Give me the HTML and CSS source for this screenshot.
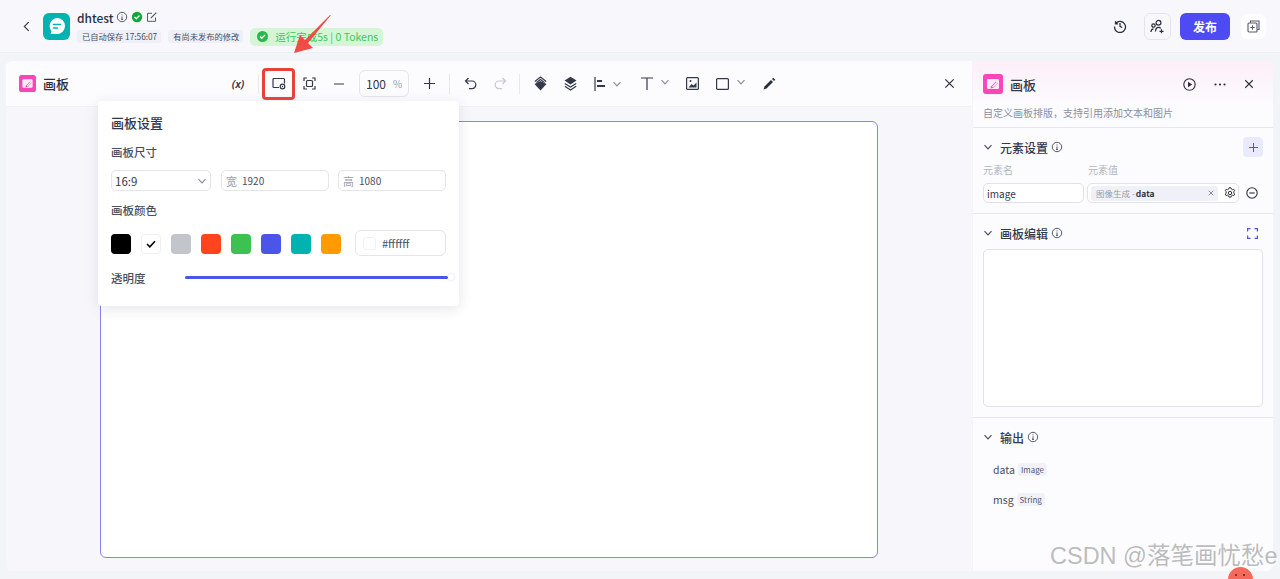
FILE: index.html
```html
<!DOCTYPE html>
<html lang="zh">
<head>
<meta charset="utf-8">
<title>画板</title>
<link rel="stylesheet" href="styles.css">
</head>
<body>
<svg class="defs" width="0" height="0" aria-hidden="true">
  <symbol id="info" viewBox="0 0 12 12"><circle cx="6" cy="6" r="4.7" fill="none" stroke="currentColor"/><path d="M6 5.400v3M5 8.400h2M6 3.400v1" fill="none" stroke="currentColor"/></symbol>
  <symbol id="chev" viewBox="0 0 10 10"><path d="M1.500 3.200 5 6.800l3.500-3.600" fill="none" stroke="currentColor" stroke-width="1.200"/></symbol>
  <symbol id="x" viewBox="0 0 12 12"><path d="M1.500 1.500l9 9M10.500 1.500l-9 9" fill="none" stroke="currentColor" stroke-width="1.300"/></symbol>
  <symbol id="board" viewBox="0 0 20 20"><rect width="20" height="20" rx="3" fill="#fb45b8"/><rect x="4" y="5" width="12" height="10" rx="1.200" fill="#fff" opacity=".9"/><path d="M8 12.500l5-5 2 1.500-5 5-2.500.5z" fill="#fb45b8"/><path d="M9.500 13l5-5" stroke="#fff" stroke-width="1.200"/></symbol>
</svg>

<header class="topbar">
  <svg class="back" width="7" height="11" viewBox="0 0 8 12"><path d="M6.500 1 1.500 6l5 5" fill="none" stroke="#33384a" stroke-width="1.300"/></svg>
  <div class="app-logo">
    <svg width="20" height="20" viewBox="0 0 20 20"><path d="M10 2a8 8 0 0 1 0 16H3.500l1-3A8 8 0 0 1 10 2z" fill="#fff"/><path d="M6.500 8.500h7M6.500 12h4" stroke="#00b2b0" stroke-width="1.600" stroke-linecap="round"/></svg>
  </div>
  <div class="app-meta">
    <div class="app-name-row">
      <span class="app-name">dhtest</span>
      <svg class="ico-info-dark" width="12" height="12"><use href="#info"/></svg>
      <svg width="12" height="12" viewBox="0 0 12 12"><circle cx="6" cy="6" r="5.200" fill="#12a537"/><path d="M3.500 6l1.800 1.800 3.200-3.300" fill="none" stroke="#fff" stroke-width="1.300"/></svg>
      <svg width="12" height="12" viewBox="0 0 12 12"><path d="M9.500 6.500v3.800h-8v-8h4.500" fill="none" stroke="#555a69"/><path d="M4.800 7.200l5.500-5.500" stroke="#555a69" stroke-width="1.200"/></svg>
    </div>
    <div class="app-tags">
      <span class="tag">已自动保存 17:56:07</span>
      <span class="tag">有尚未发布的修改</span>
      <span class="tag-run">
        <svg width="13" height="13" viewBox="0 0 13 13"><circle cx="6.500" cy="6.500" r="5.500" fill="#27b84a"/><path d="M4 6.500l1.800 1.800 3.300-3.400" fill="none" stroke="#fff" stroke-width="1.300"/></svg>
        运行完成5s | 0 Tokens
      </span>
    </div>
  </div>
  <div class="top-actions">
    <svg class="history" width="14" height="14" viewBox="0 0 14 14"><path d="M2.500 2.200v2.600h2.600M2.700 4.500A5.500 5.500 0 1 1 1.500 7.500M7 4v3.300l2.200 1.200" fill="none" stroke="#2b2f3d" stroke-width="1.300"/></svg>
    <div class="collab">
      <svg width="15" height="15" viewBox="0 0 15 15"><circle cx="8.500" cy="3.800" r="2.400" fill="none" stroke="#2b2f3d" stroke-width="1.200"/><circle cx="3.500" cy="6.500" r="1.700" fill="none" stroke="#2b2f3d" stroke-width="1.200"/><path d="M1 13c0-2 1-3.200 2.500-3.200M5.500 12.500c0-2.700 1.300-4.200 3-4.200 1 0 1.800.4 2.300 1.200M11.500 10.300v4M9.500 12.300h4" fill="none" stroke="#2b2f3d" stroke-width="1.200"/></svg>
    </div>
    <button class="publish">发布</button>
    <div class="copy-btn">
      <svg width="13" height="13" viewBox="0 0 13 13"><path d="M3.500 2.800V1h8.500v8.500h-1.800" fill="none" stroke="#555a69" stroke-width="1.100"/><rect x="1" y="3" width="9" height="9" rx="1" fill="none" stroke="#555a69" stroke-width="1.100"/><path d="M5.500 5.300v4.400M3.300 7.500h4.400" stroke="#555a69" stroke-width="1.100"/></svg>
    </div>
  </div>
</header>

<main class="workspace">
  <section class="board-panel">
    <div class="toolbar">
      <svg class="panel-icon" width="17" height="17"><use href="#board"/></svg>
      <span class="panel-title">画板</span>
      <div class="tools">
        <span class="tool var">(x)</span>
        <span class="divider"></span>
        <span class="tool"><svg width="14" height="13" viewBox="0 0 14 13"><path d="M7 10.500H2a1 1 0 0 1-1-1V2.500a1 1 0 0 1 1-1h9.500a1 1 0 0 1 1 1v4" fill="none" stroke="#33384a" stroke-width="1.200"/><circle cx="10.500" cy="9.500" r="2.300" fill="none" stroke="#33384a" stroke-width="1.200"/><circle cx="10.500" cy="9.500" r=".7" fill="#33384a"/></svg></span>
        <span class="tool"><svg width="13" height="13" viewBox="0 0 13 13"><path d="M1 4V1h3M9 1h3v3M12 9v3H9M4 12H1V9" fill="none" stroke="#33384a" stroke-width="1.200"/><rect x="3.500" y="3.500" width="6" height="6" rx="1" fill="none" stroke="#33384a" stroke-width="1.200"/></svg></span>
        <span class="tool"><svg width="10" height="2" viewBox="0 0 10 2"><path d="M0 1h10" stroke="#33384a" stroke-width="1.200"/></svg></span>
        <span class="zoom-box"><span class="zoom-num">100</span><span class="zoom-unit">%</span></span>
        <span class="tool"><svg width="11" height="11" viewBox="0 0 11 11"><path d="M0 5.500h11M5.500 0v11" stroke="#33384a" stroke-width="1.200"/></svg></span>
        <span class="divider"></span>
        <span class="tool"><svg width="13" height="13" viewBox="0 0 13 13"><path d="M4.500 1 1.500 4l3 3M1.500 4H8a3.800 3.800 0 0 1 0 7.600H5" fill="none" stroke="#33384a" stroke-width="1.200"/></svg></span>
        <span class="tool"><svg width="13" height="13" viewBox="0 0 13 13"><path d="M8.500 1l3 3-3 3M11.500 4H5a3.800 3.800 0 0 0 0 7.600h3" fill="none" stroke="#c5c8d2" stroke-width="1.200"/></svg></span>
        <span class="divider divider-tight"></span>
        <span class="tool"><svg width="13" height="15" viewBox="0 0 13 15"><path d="M6.500 5 12.500 8 6.500 14.500.5 8z" fill="#33384a"/><path d="M.8 5.500 6.500 1l5.700 4.500M2.500 6.500l4-3 4 3" fill="none" stroke="#33384a" stroke-width="1.100"/></svg></span>
        <span class="tool"><svg width="13" height="15" viewBox="0 0 13 15"><path d="M6.500.8 12.500 4.500 6.500 8.500.5 4.500z" fill="#33384a"/><path d="M.8 7.500l5.700 3.500 5.700-3.500M.8 10.300l5.700 3.700 5.700-3.700" fill="none" stroke="#33384a" stroke-width="1.100"/></svg></span>
        <span class="tool tool-drop"><svg class="drop-main" width="12" height="14" viewBox="0 0 12 14"><path d="M1 0v14" stroke="#33384a" stroke-width="1.200"/><path d="M3 3h5v2H3zM3 8h8v2H3z" fill="#33384a"/></svg><svg class="chev" width="10" height="10"><use href="#chev"/></svg></span>
        <span class="tool tool-drop tool-t"><svg class="drop-main" width="12" height="13" viewBox="0 0 12 13"><path d="M0 1h12M6 1v12" stroke="#33384a" stroke-width="1.200"/></svg><svg class="chev" width="10" height="10"><use href="#chev"/></svg></span>
        <span class="tool"><svg width="13" height="13" viewBox="0 0 13 13"><rect x=".6" y=".6" width="11.800" height="11.800" rx="1" fill="none" stroke="#33384a" stroke-width="1.200"/><path d="M2.500 10.500l3-3.500 2 1.500 3-3v5z" fill="#33384a"/><circle cx="4.500" cy="4" r="1" fill="#33384a"/></svg></span>
        <span class="tool tool-drop tool-rect"><svg class="drop-main" width="13" height="12" viewBox="0 0 13 12"><rect x=".6" y=".6" width="11.800" height="10.800" rx="1" fill="none" stroke="#33384a" stroke-width="1.200"/></svg><svg class="chev" width="10" height="10"><use href="#chev"/></svg></span>
        <span class="tool"><svg width="13" height="13" viewBox="0 0 13 13"><path d="M.5 12.500 1.500 9.500 8 3l2 2-6.500 6.500z" fill="#2b2f3d"/><path d="M9 2l1.300-1.300 2 2L11 4z" fill="#2b2f3d"/></svg></span>
      </div>
      <svg class="toolbar-close" width="11" height="11"><use href="#x"/></svg>
    </div>
    <div class="canvas">
      <div class="artboard"></div>
    </div>
  </section>

  <aside class="side-panel">
    <div class="side-head">
      <div class="side-title-row">
        <svg width="20" height="20"><use href="#board"/></svg>
        <span class="side-title">画板</span>
        <div class="side-actions">
          <svg width="13" height="13" viewBox="0 0 13 13"><circle cx="6.500" cy="6.500" r="5.700" fill="none" stroke="#2b2f3d" stroke-width="1.100"/><path d="M5 3.800v5.400l4.200-2.700z" fill="#2b2f3d"/></svg>
          <svg width="12" height="3" viewBox="0 0 12 3"><circle cx="1.500" cy="1.500" r="1.100" fill="#2b2f3d"/><circle cx="6" cy="1.500" r="1.100" fill="#2b2f3d"/><circle cx="10.500" cy="1.500" r="1.100" fill="#2b2f3d"/></svg>
          <svg width="10" height="10" viewBox="0 0 12 12"><use href="#x"/></svg>
        </div>
      </div>
      <p class="side-desc">自定义画板排版，支持引用添加文本和图片</p>
    </div>

    <div class="section section-elements">
      <div class="sec-head">
        <svg class="sec-chev" width="10" height="10"><use href="#chev"/></svg>
        <span class="sec-title">元素设置</span>
        <svg class="sec-info" width="12" height="12"><use href="#info"/></svg>
        <span class="add-btn">
          <svg width="9" height="9" viewBox="0 0 9 9"><path d="M0 4.500h9M4.500 0v9" stroke="#4f54e8" stroke-width="1"/></svg>
        </span>
      </div>
      <div class="el-labels"><span class="el-label-name">元素名</span><span>元素值</span></div>
      <div class="el-row">
        <span class="el-name">image</span>
        <span class="el-value">
          <span class="chip"><span class="chip-src">图像生成 -</span> <b class="chip-key">data</b>
            <svg class="chip-x" width="6" height="6" viewBox="0 0 12 12"><use href="#x"/></svg>
          </span>
          <svg class="gear" width="12" height="12" viewBox="0 0 12 12"><path d="M6 .7l1 .1.4 1.300 1.100.6 1.300-.4.9 1.400-.9 1v1.400l.9 1-.9 1.500-1.300-.4-1.100.6-.4 1.300H5l-.4-1.300-1.100-.6-1.300.4-.9-1.500.9-1v-1.400l-.9-1 .9-1.400 1.300.4 1.100-.6L5 .8z" fill="none" stroke="#2b2f3d"/><circle cx="6" cy="6" r="1.700" fill="none" stroke="#2b2f3d"/></svg>
        </span>
        <svg class="el-remove" width="12" height="12" viewBox="0 0 12 12"><circle cx="6" cy="6" r="5.200" fill="none" stroke="#2b2f3d" stroke-width="1.100"/><path d="M3.300 6h5.400" stroke="#2b2f3d" stroke-width="1.100"/></svg>
      </div>
    </div>

    <div class="section section-edit">
      <div class="sec-head">
        <svg class="sec-chev" width="10" height="10"><use href="#chev"/></svg>
        <span class="sec-title">画板编辑</span>
        <svg class="sec-info" width="12" height="12"><use href="#info"/></svg>
        <svg class="expand" width="11" height="11" viewBox="0 0 11 11"><path d="M.6 3.500V.6h2.900M7.500.6h2.900v2.900M10.400 7.500v2.900H7.500M3.500 10.400H.6V7.500" fill="none" stroke="#4f54e8" stroke-width="1.200"/></svg>
      </div>
      <div class="edit-area"></div>
    </div>

    <div class="section section-output">
      <div class="sec-head">
        <svg class="sec-chev" width="10" height="10"><use href="#chev"/></svg>
        <span class="sec-title">输出</span>
        <svg class="sec-info" width="12" height="12"><use href="#info"/></svg>
      </div>
      <div class="out-row"><span>data</span><span class="type">Image</span></div>
      <div class="out-row"><span>msg</span><span class="type">String</span></div>
    </div>
  </aside>
</main>

<div class="popover">
  <h3 class="pop-title">画板设置</h3>
  <div class="pop-label">画板尺寸</div>
  <div class="size-row">
    <span class="field field-ratio"><span>16:9</span><svg width="10" height="10"><use href="#chev"/></svg></span>
    <span class="field field-num"><i>宽</i><span>1920</span></span>
    <span class="field field-num"><i>高</i><span>1080</span></span>
  </div>
  <div class="pop-label pop-label-color">画板颜色</div>
  <div class="color-row">
    <span class="swatch c-black"></span>
    <span class="swatch c-white"><svg width="10" height="8" viewBox="0 0 10 8"><path d="M1 4l2.800 2.800L9 1.200" fill="none" stroke="#000" stroke-width="1.500"/></svg></span>
    <span class="swatch c-gray"></span>
    <span class="swatch c-red"></span>
    <span class="swatch c-green"></span>
    <span class="swatch c-blue"></span>
    <span class="swatch c-teal"></span>
    <span class="swatch c-orange"></span>
    <span class="hex"><span class="hex-dot"></span>#ffffff</span>
  </div>
  <div class="opacity-row">
    <span class="pop-label-plain">透明度</span>
    <span class="slider"><span class="knob"></span></span>
  </div>
</div>

<div class="mark-box"></div>
<svg class="arrow" width="50" height="50" viewBox="0 0 50 50"><path d="M41 0 18 28 23 33 4 38 10 20 15 25 40 0z" fill="#f14b45"/></svg>

<div class="watermark">CSDN @落笔画忧愁e</div>
<div class="blob"><span></span><span></span></div>
</body>
</html>
```
FILE: styles.css
```css
* { box-sizing: border-box; }
html, body { margin: 0; padding: 0; }
body {
  width: 1280px;
  height: 579px;
  overflow: hidden;
  position: relative;
  background: #f3f4f8;
  font-family: "Noto Sans CJK SC", "Noto Sans", sans-serif;
  color: #33384a;
}
.defs { position: absolute; }

/* top bar */
.topbar {
  height: 53px;
  display: flex;
  align-items: center;
  background: #f8f8fc;
  border-bottom: 1px solid #eeeff4;
  padding-left: 23px;
}
.back { margin-right: 13px; }
.app-logo {
  width: 27px;
  height: 27px;
  border-radius: 6px;
  background: #00b2b0;
  display: flex;
  align-items: center;
  justify-content: center;
}
.app-meta { margin-left: 7px; display: flex; flex-direction: column; gap: 2px; margin-top: 2px; }
.app-name-row { display: flex; align-items: center; gap: 3px; height: 17px; }
.app-name { font-size: 12px; font-weight: 500; color: #2b2f3d; margin-right: -1px; }
.ico-info-dark { color: #555a69; }
.app-tags { display: flex; align-items: center; gap: 7px; }
.tag {
  font-size: 8.25px;
  line-height: 13px;
  padding: 0 4px 0 5px;
  background: #eeeff7;
  border-radius: 3px;
  color: #4a4f5f;
  white-space: nowrap;
}
.tag-run {
  height: 18px;
  width: 133px;
  padding-left: 6px;
  display: flex;
  align-items: center;
  gap: 6px;
  border-radius: 5px;
  background: #d5f5d7;
  color: #3cc85a;
  font-size: 10.5px;
  white-space: nowrap;
}
.top-actions { margin-left: auto; display: flex; align-items: center; padding-right: 14px; }
.history { margin-right: 17px; }
.collab {
  width: 27px;
  height: 27px;
  border: 1px solid #e4e5ec;
  border-radius: 6px;
  display: flex;
  align-items: center;
  justify-content: center;
  margin-right: 9px;
}
.publish {
  width: 50px;
  height: 27px;
  border: 0;
  border-radius: 6px;
  background: #4e4bf5;
  color: #fff;
  font: 600 12px "Noto Sans CJK SC", sans-serif;
  padding: 0;
  margin-right: 11px;
}
.copy-btn {
  width: 25px;
  height: 25px;
  border-radius: 6px;
  background: #fff;
  display: flex;
  align-items: center;
  justify-content: center;
}

/* workspace */
.workspace {
  display: flex;
  height: 526px;
  padding: 8px 7px 8px 6px;
  gap: 1px;
}
.board-panel {
  width: 966px;
  display: flex;
  flex-direction: column;
  border-radius: 6px 0 0 6px;
  overflow: hidden;
  background: #f7f7fb;
}
.toolbar {
  height: 46px;
  flex: none;
  display: flex;
  align-items: center;
  background: #fcfcff;
  border-bottom: 1px solid #f0f0f6;
  padding: 0 17px 0 13px;
}
.panel-title { margin-left: 7px; font-size: 13px; font-weight: 500; color: #2b2f3d; width: 180px; }
.tools { display: flex; align-items: center; }
.tool {
  width: 30px;
  height: 20px;
  display: flex;
  align-items: center;
  justify-content: center;
  flex: none;
}
.var { font: italic 600 11px "Noto Sans", sans-serif; color: #33384a; }
.divider { width: 1px; height: 20px; background: #e8e9ef; margin: 0 5px; flex: none; }
.divider-tight { margin-left: 4px; }
.zoom-box {
  width: 50px;
  height: 27px;
  margin: 0 5px;
  border: 1px solid #e4e5ec;
  border-radius: 6px;
  display: flex;
  align-items: center;
  padding-left: 6px;
  font-size: 12px;
}
.zoom-unit { margin-left: 7px; font-size: 10px; color: #9b9ea9; }
.tool-drop { width: 45px; justify-content: flex-start; padding-left: 9px; }
.tool-t { width: 45px; margin-left: 2px; }
.tool-rect { width: 47px; }
.tool-t .chev { margin-left: 7px; margin-top: -3px; }
.tool-rect .chev { margin-left: 7px; margin-top: -3px; }
.drop-main { flex: none; }
.chev { color: #8a8e9b; margin-left: 6px; flex: none; }
.toolbar-close { margin-left: auto; color: #2b2f3d; }

.canvas { flex: 1; padding: 14px 94px 13px 94px; }
.artboard {
  height: 100%;
  background: #fff;
  border: 1px solid #8583f6;
  border-radius: 6px;
}

/* side panel */
.side-panel {
  width: 300px;
  background: #fcfcff;
  border-radius: 0 6px 6px 0;
  display: flex;
  flex-direction: column;
}
.side-head {
  height: 67px;
  flex: none;
  padding: 13px 10px 0;
  background: linear-gradient(180deg, #fdeff8 0%, #fcfcff 70%);
  border-bottom: 1px solid #e6e7ef;
  border-radius: 0 6px 0 0;
}
.side-title-row { display: flex; align-items: center; height: 20px; }
.side-title { margin-left: 7px; font-size: 13px; font-weight: 500; color: #33384a; }
.side-actions {
  margin-left: auto;
  display: flex;
  align-items: center;
  gap: 18px;
  padding-right: 9px;
  color: #2b2f3d;
}
.side-desc { margin: 12px 0 0; font-size: 10px; line-height: 14px; color: #8a8f9f; }

.section { border-bottom: 1px solid #e6e7ef; padding: 0 10px; flex: none; }
.section-elements { height: 86px; padding-top: 9px; }
.section-edit { height: 204px; padding-top: 9px; }
.section-output { border-bottom: 0; padding-top: 9px; flex: 1; }
.sec-head { display: flex; align-items: center; height: 20px; }
.sec-chev { color: #4a4f5f; margin-right: 7px; flex: none; }
.sec-title { font-size: 12px; font-weight: 500; color: #33384a; }
.sec-info { color: #555a69; margin-left: 3px; }
.add-btn {
  margin-left: auto;
  width: 20px;
  height: 20px;
  border-radius: 4px;
  background: #eaeafe;
  display: flex;
  align-items: center;
  justify-content: center;
}
.expand { margin-left: auto; margin-right: 5px; }
.el-labels { display: flex; font-size: 10px; line-height: 14px; color: #b3b6c0; margin-top: 6px; }
.el-label-name { width: 105px; }
.el-row { display: flex; align-items: center; margin-top: 6px; }
.el-name {
  width: 101px;
  height: 20px;
  border: 1px solid #e0e1ea;
  border-radius: 5px;
  font-size: 10px;
  line-height: 19px;
  padding-left: 3px;
  background: #fff;
}
.el-value {
  width: 152px;
  height: 20px;
  margin-left: 3px;
  border: 1px solid #e0e1ea;
  border-radius: 5px;
  display: flex;
  align-items: center;
  padding-left: 3px;
  background: #fff;
}
.chip {
  width: 127px;
  height: 15px;
  background: #f0f1f8;
  border-radius: 3px;
  display: flex;
  align-items: center;
  padding-left: 5px;
  font-size: 8.5px;
  gap: 1px;
}
.chip-src { color: #9a9daa; }
.chip-key { font-size: 8.5px; font-weight: 600; color: #33384a; }
.chip-x { margin-left: auto; margin-right: 4px; color: #555a69; }
.gear { margin-left: 6px; }
.el-remove { margin-left: 7px; }
.edit-area {
  height: 158px;
  margin-top: 6px;
  background: #fff;
  border: 1px solid #e0e1ea;
  border-radius: 5px;
}
.out-row { display: flex; align-items: center; gap: 3px; font-size: 10.5px; padding-left: 10px; height: 16px; margin-top: 14px; color: #4a4f5f; }
.type {
  font-size: 8px;
  line-height: 13px;
  padding: 0 3px;
  background: #f1f1fa;
  border-radius: 3px;
  color: #555a69;
}

/* popover */
.popover {
  position: absolute;
  left: 98px;
  top: 101px;
  width: 361px;
  height: 205px;
  background: #fff;
  border-radius: 4px;
  box-shadow: 0 3px 14px rgba(40, 44, 80, .12);
  padding: 12px 10px 0 13px;
}
.pop-title { margin: 0; font-size: 13px; line-height: 19px; font-weight: 500; color: #33384a; }
.pop-label { margin-top: 11px; font-size: 11.5px; line-height: 18px; font-weight: 500; color: #4a4f5f; }
.pop-label-color { margin-top: 10px; }
.size-row { display: flex; margin-top: 9px; height: 21px; }
.field {
  height: 21px;
  border: 1px solid #e4e5ec;
  border-radius: 5px;
  display: flex;
  align-items: center;
  font-size: 10px;
  color: #4a4f5f;
  flex: none;
}
.field-ratio { width: 100px; padding: 0 3px; justify-content: space-between; font-size: 11.5px; margin-right: 10px; color: #33384a; }
.field-ratio svg { color: #8a8e9b; }
.field-num { width: 108px; margin-right: 9px; padding-left: 4px; }
.field-num:last-child { margin-right: 0; }
.field-num i { font-style: normal; font-size: 11px; color: #9b9ea9; margin-right: 5px; }
.color-row { display: flex; align-items: center; gap: 10px; margin-top: 11px; height: 26px; }
.swatch {
  width: 20px;
  height: 20px;
  border-radius: 4px;
  flex: none;
  display: flex;
  align-items: center;
  justify-content: center;
  margin-top: 2px;
}
.c-black { background: #000; }
.c-white { background: #fff; border: 1px solid #f0f0f6; }
.c-gray { background: #c3c5cd; }
.c-red { background: #ff441e; }
.c-green { background: #3dc252; }
.c-blue { background: #4c55ea; }
.c-teal { background: #00b2b0; }
.c-orange { background: #ff9a00; }
.hex {
  width: 91px;
  height: 26px;
  margin-left: 4px;
  border: 1px solid #e4e5ec;
  border-radius: 6px;
  display: flex;
  align-items: center;
  padding-left: 7px;
  font-size: 11px;
  color: #4a4f5f;
  gap: 6px;
  flex: none;
}
.hex-dot { width: 13px; height: 13px; border: 1px solid #f0f0f6; border-radius: 3px; }
.opacity-row { display: flex; align-items: center; margin-top: 11px; height: 22px; }
.pop-label-plain { width: 74px; font-size: 11.5px; font-weight: 500; color: #4a4f5f; flex: none; }
.slider {
  width: 263px;
  height: 3px;
  border-radius: 2px;
  background: #4c55ea;
  margin-top: -2px;
  position: relative;
  flex: none;
}
.knob {
  position: absolute;
  right: -6px;
  top: -2px;
  width: 6px;
  height: 6px;
  border-radius: 50%;
  background: #fff;
  box-shadow: 0 0 3px rgba(60, 60, 90, .25);
}

/* annotations */
.mark-box {
  position: absolute;
  left: 262px;
  top: 68px;
  width: 33px;
  height: 32px;
  border: 3px solid #e9423b;
  border-radius: 4px;
}
.arrow { position: absolute; left: 290px; top: 15px; }

.watermark {
  position: absolute;
  left: 1050px;
  top: 540px;
  font-family: "Liberation Sans", "Noto Sans CJK SC", sans-serif;
  font-size: 23.5px;
  line-height: 32px;
  color: rgba(150, 150, 150, .65);
  text-shadow: 1px 1px 1px rgba(255, 255, 255, .6);
  white-space: nowrap;
}
.blob {
  position: absolute;
  left: 1228px;
  top: 567px;
  width: 25px;
  height: 25px;
  border-radius: 50%;
  background: #f4695b;
}
.blob span { position: absolute; top: 7px; left: 7px; width: 2px; height: 2px; background: #5a2620; border-radius: 50%; }
.blob span + span { left: 15px; }
```
